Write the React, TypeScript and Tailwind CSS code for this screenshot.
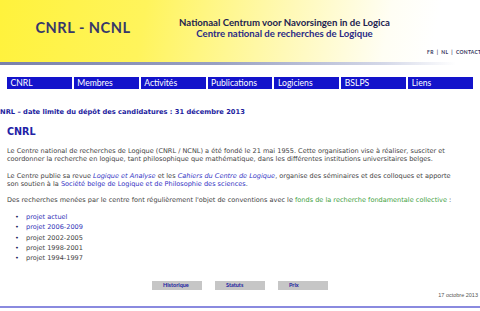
import React from 'react'

/* ------------------------------------------------------------------ */
/*  Data                                                               */
/* ------------------------------------------------------------------ */

const NAV = ['CNRL', 'Membres', 'Activités', 'Publications', 'Logiciens', 'BSLPS', 'Liens']

const PROJECTS: { label: string; link: boolean }[] = [
  { label: 'projet actuel', link: true },
  { label: 'projet 2006-2009', link: true },
  { label: 'projet 2002-2005', link: false },
  { label: 'projet 1998-2001', link: false },
  { label: 'projet 1994-1997', link: false },
]

const FOOTER_BUTTONS = ['Historique', 'Statuts', 'Prix']

const gill = { fontFamily: 'Lato, "Open Sans", sans-serif' }
const verdana = { fontFamily: '"DejaVu Sans", Verdana, sans-serif' }

/* ------------------------------------------------------------------ */
/*  Page                                                               */
/* ------------------------------------------------------------------ */

export default function App() {
  return (
    <div className="w-[480px] h-[311px] overflow-hidden bg-white" style={verdana}>
      {/* header */}
      <div className="h-[62px] flex flex-col bg-[linear-gradient(100deg,#fff23c_0%,#fff45c_30%,#fff9b8_60%,#fffef4_80%,#ffffff_90%)]">
        <div className="flex items-center pt-[17px]" style={gill}>
          <div className="w-[166px] flex justify-center">
            <span className="text-[14.6px] font-bold tracking-[0.5px] text-[#37376a] leading-none">CNRL - NCNL</span>
          </div>
          <div className="w-[237px] flex flex-col items-center leading-[11px]">
            <span className="text-[9.6px] font-bold text-[#22224f] whitespace-nowrap">Nationaal Centrum voor Navorsingen in de Logica</span>
            <span className="text-[9.6px] font-bold text-[#2a2a86] whitespace-nowrap">Centre national de recherches de Logique</span>
          </div>
        </div>
        <div className="mt-auto mb-[7px] pl-[427px] text-[5px] font-bold tracking-[0.3px] text-[#33335a] whitespace-nowrap leading-none" style={gill}>
          FR&nbsp;&nbsp;|&nbsp;&nbsp;NL&nbsp;&nbsp;|&nbsp;&nbsp;CONTACT
        </div>
      </div>
      <div className="h-[3px] bg-[linear-gradient(90deg,#7a81ab_0%,#98a0c2_45%,#d4d8e8_80%,#ffffff_95%)]" />

      {/* navigation */}
      <div className="mt-[12px] px-[7px] flex gap-[2px]" style={gill}>
        {NAV.map(n => (
          <div key={n} className="w-[65.7px] h-[12px] bg-[#1313cb] text-white text-[8.6px] leading-[12px] pl-[3.5px] whitespace-nowrap overflow-hidden">
            {n}
          </div>
        ))}
      </div>

      {/* news ticker */}
      <div className="mt-[19px] h-[9px] overflow-hidden whitespace-nowrap">
        <span className="block ml-[-4.8px] text-[6.7px] leading-[9px] font-bold text-[#1d1d9e]">
          CNRL – date limite du dépôt des candidatures : 31 décembre 2013
        </span>
      </div>

      {/* content */}
      <div className="px-[7px] text-[#444444] text-[6.55px] whitespace-nowrap">
        <h1 className="mt-[9px] text-[9.6px] leading-[12px] font-bold text-[#2222a6]">CNRL</h1>

        <p className="mt-[8.5px] leading-[8.5px]">
          Le Centre national de recherches de Logique (CNRL / NCNL) a été fondé le 21 mai 1955. Cette organisation vise à réaliser, susciter et
          <br />
          coordonner la recherche en logique, tant philosophique que mathématique, dans les différentes institutions universitaires belges.
        </p>

        <p className="mt-[8px] leading-[8.5px]">
          Le Centre publie sa revue <span className="italic text-[#3434c4]">Logique et Analyse</span> et les{' '}
          <span className="italic text-[#3434c4]">Cahiers du Centre de Logique</span>, organise des séminaires et des colloques et apporte
          <br />
          son soutien à la <span className="text-[#3434c4]">Société belge de Logique et de Philosophie des sciences</span>.
        </p>

        <p className="mt-[7.5px] leading-[8.5px]">
          Des recherches menées par le centre font régulièrement l'objet de conventions avec le{' '}
          <span className="text-[#3f9f3f]">fonds de la recherche fondamentale collective</span> :
        </p>

        <ul className="mt-[7.7px]">
          {PROJECTS.map(p => (
            <li key={p.label} className="flex leading-[10.3px]">
              <span className="w-[19px] pl-[8px] text-[#22225a]">•</span>
              <span className={p.link ? 'text-[#3434b8]' : ''}>{p.label}</span>
            </li>
          ))}
        </ul>
      </div>

      {/* footer */}
      <div className="mt-[17px] flex justify-center gap-[13px]" style={gill}>
        {FOOTER_BUTTONS.map(b => (
          <div key={b} className="w-[50px] h-[9px] bg-[#c6c6c6] pl-[11px] text-[5.5px] leading-[9px] font-bold text-[#1c1ca0]">
            {b}
          </div>
        ))}
      </div>
      <div className="mt-[2px] pr-[2px] text-right text-[5.5px] leading-[6px] not-italic text-[#555]" style={{ fontFamily: '"Liberation Sans", Arial, sans-serif' }}>
        17 octobre 2013
      </div>
      <div className="mt-[8px] h-[2.5px] bg-[#8a8adf]" />
    </div>
  )
}
